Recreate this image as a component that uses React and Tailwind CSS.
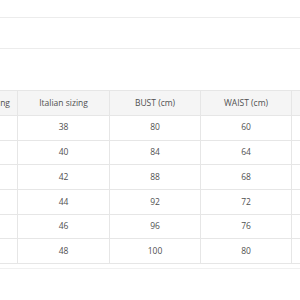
export default function App() {
  const rows = [
    ["38", "80", "60"],
    ["40", "84", "64"],
    ["42", "88", "68"],
    ["44", "92", "72"],
    ["46", "96", "76"],
    ["48", "100", "80"],
  ];
  const cell = "border-r border-b border-[#e6e6e6] flex items-center justify-center";
  return (
    <div className="w-[300px] h-[300px] bg-white overflow-hidden text-[#505050]" style={{ fontFamily: '"Open Sans", sans-serif' }}>
      <div className="h-[17px]" />
      <div className="h-[31px] border-t border-[#ececec]" />
      <div className="h-[42px] border-t border-[#ececec]" />
      <div className="ml-[-73px] w-[500px] text-[8.5px]">
        <div className="grid grid-cols-[91px_92px_91px_91px_135px] h-[26px] bg-[#f5f5f5] border-t border-[#e6e6e6]">
          <div className={cell + " justify-end pr-[7px]"}>International sizing</div>
          <div className={cell}>Italian sizing</div>
          <div className={cell}>BUST (cm)</div>
          <div className={cell}>WAIST (cm)</div>
          <div className={cell}>HIPS (cm)</div>
        </div>
        {rows.map((r, ri) => (
          <div key={ri} className="grid grid-cols-[91px_92px_91px_91px_135px] h-[24.7px]">
            <div className={cell}></div>
            <div className={cell}>{r[0]}</div>
            <div className={cell}>{r[1]}</div>
            <div className={cell}>{r[2]}</div>
            <div className={cell}></div>
          </div>
        ))}
        <div className="mt-[4px] border-t border-[#f0f0f0]" />
      </div>
    </div>
  );
}
